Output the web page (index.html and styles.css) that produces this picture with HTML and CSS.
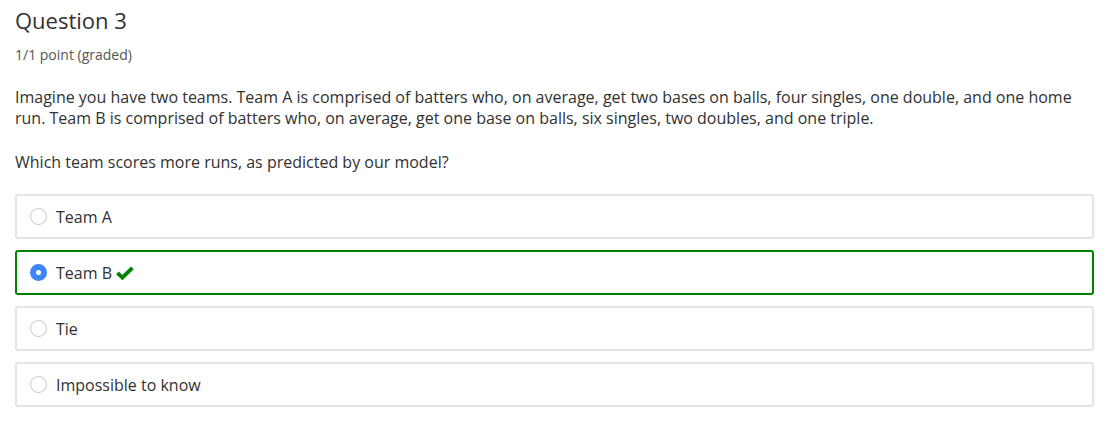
FILE: index.html
```html
<!DOCTYPE html>
<html>
<head>
<meta charset="utf-8">
<link rel="stylesheet" href="styles.css">
</head>
<body>
<div class="problem">
  <h3 class="title">Question 3</h3>
  <div class="points">1/1 point (graded)</div>
  <p class="prompt">Imagine you have two teams. Team A is comprised of batters who, on average, get two bases on balls, four singles, one double, and one home run. Team B is comprised of batters who, on average, get one base on balls, six singles, two doubles, and one triple.</p>
  <p class="prompt question">Which team scores more runs, as predicted by our model?</p>
  <div class="choices">
    <label class="choice"><span class="radio"></span><span class="label-text">Team A</span></label>
    <label class="choice correct"><span class="radio checked"></span><span class="label-text">Team B</span>
      <svg class="check" width="18" height="14" viewBox="0 0 18 14"><path d="M1.4 6.8 L6.4 11.6 L16.4 1.8" fill="none" stroke="#008100" stroke-width="3.8" stroke-linecap="butt" stroke-linejoin="miter"/></svg>
    </label>
    <label class="choice"><span class="radio"></span><span class="label-text">Tie</span></label>
    <label class="choice"><span class="radio"></span><span class="label-text">Impossible to know</span></label>
  </div>
</div>
</body>
</html>
```

FILE: styles.css
```css
html, body {
  margin: 0;
  padding: 0;
  background: #fff;
}
body {
  font-family: "Open Sans", "Liberation Sans", sans-serif;
  color: #313131;
}
.problem {
  padding: 5px 17px 0 15px;
}
.title {
  margin: 0;
  font-size: 22px;
  font-weight: 400;
  line-height: 30px;
  color: #313131;
}
.points {
  margin-top: 10px;
  font-size: 14px;
  line-height: 20px;
  color: #555;
}
.prompt {
  margin: 22px 0 0;
  font-size: 16px;
  line-height: 21px;
}
.prompt.question {
  margin-top: 23px;
}
.choices {
  margin-top: 21px;
  display: flex;
  flex-direction: column;
  gap: 11px;
}
.choice {
  display: flex;
  align-items: center;
  height: 45px;
  box-sizing: border-box;
  border: 2px solid #e4e4e4;
  border-radius: 3px;
  padding: 0 14px 0 13px;
  font-size: 16px;
}
.choice.correct {
  border-color: #008100;
}
.radio {
  width: 17px;
  height: 17px;
  border-radius: 50%;
  border: 1px solid #c6c6c6;
  box-sizing: border-box;
  margin-right: 9px;
  background: #fff;
  flex: none;
}
.radio.checked {
  border: 6px solid #3d86f6;
  background: #fff;
}
.check {
  margin-left: 4px;
  margin-top: 0;
}
```
